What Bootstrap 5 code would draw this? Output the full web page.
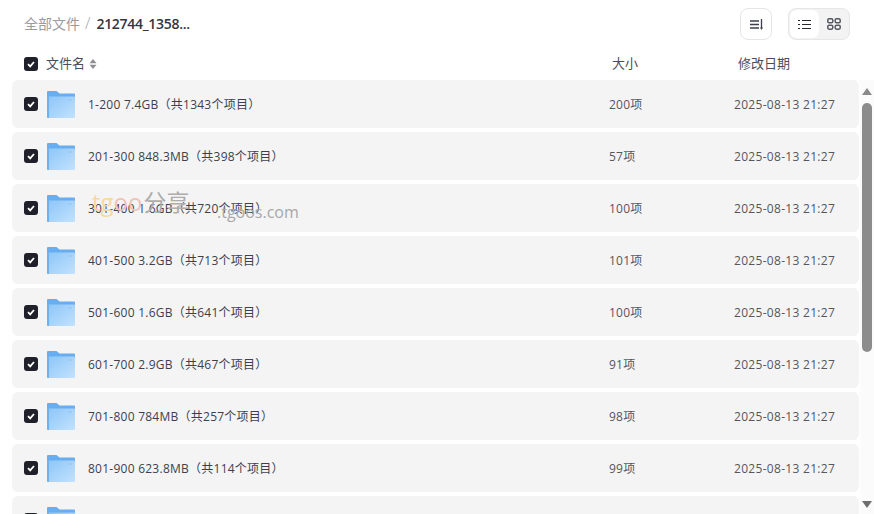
<!DOCTYPE html>
<html lang="zh-CN">
<head>
  <meta charset="UTF-8" />
  <title>全部文件</title>
  <meta name="viewport" content="width=device-width, initial-scale=1" />
  <link href="https://cdn.jsdelivr.net/npm/bootstrap@5.3.0/dist/css/bootstrap.min.css" rel="stylesheet" />
  <style>
    html, body { height: 100%; overflow: hidden; }
    body {
      background: #fff;
      color: #3d3f4e;
      font-family: "Open Sans", "Noto Sans CJK SC", sans-serif;
      font-size: 13px;
    }
    .page-wrap { height: 514px; width: 874px; overflow: hidden; position: relative; }
    .top-bar { height: 48px; padding: 0 24px; }
    .crumb-box { margin-top: -2px; }
    .crumb-root { color: #9a9a9f; font-size: 14px; }
    .crumb-sep { color: #a5a5aa; margin: 0 6px 0 5px; font-size: 16px; line-height: 1; font-weight: 300; }
    .crumb-cur { color: #33353f; font-weight: 600; font-size: 14px; letter-spacing: -.3px; }
    .sort-btn {
      width: 32px; height: 32px; border: 1px solid #e6e6e8; border-radius: 8px;
      background: #fff; padding: 0;
    }
    .view-switch {
      height: 32px; width: 62px; margin-left: 16px; padding: 1px;
      background: #f3f3f4; border: 1px solid #e6e6e8; border-radius: 8px;
    }
    .view-on { width: 30px; background: #fff; border-radius: 7px; }
    .view-off { width: 30px; }
    .head-row { height: 32px; padding: 0 24px; color: #4b4d5a; }
    .tick {
      width: 14px; height: 14px; flex: none; background: #1f2029; border-radius: 3px;
    }
    .head-size { width: 126px; flex: none; }
    .head-date { width: 125px; flex: none; }
    .head-name { margin-left: 8px; width: 566px; flex: none; }
    .list-wrap { height: 434px; overflow: hidden; padding: 0 15px 0 12px; }
    .file-row {
      height: 48px; background: #f4f4f5; border-radius: 6px; margin-bottom: 4px;
      padding-left: 12px; white-space: nowrap; font-size: 12px; letter-spacing: .25px;
    }
    .folder { width: 30px; height: 30px; flex: none; margin-left: 8px; }
    .file-name { width: 521px; flex: none; margin-left: 12px; padding-top: 2px; color: #3d3f4e; }
    .file-size { width: 125px; flex: none; padding-top: 2px; color: #55565f; }
    .file-date { width: 125px; flex: none; padding-top: 2px; color: #55565f; letter-spacing: .3px; }
    .bar-track {
      position: absolute; right: 0; top: 80px; bottom: 0; width: 14px; background: #fbfbfb;
    }
    .bar-up, .bar-down {
      position: absolute; left: 2px; width: 0; height: 0;
      border-left: 5px solid transparent; border-right: 5px solid transparent;
    }
    .bar-up { top: 8px; border-bottom: 7px solid #8a8a8a; }
    .bar-down { bottom: 6px; border-top: 7px solid #6e6e6e; }
    .bar-thumb {
      position: absolute; left: 2px; top: 23px; width: 10px; height: 249px;
      background: #8c8c8c; border-radius: 5px;
    }
    .mark-wrap {
      position: absolute; left: 92px; top: 184px; white-space: nowrap;
      pointer-events: none; font-size: 24px;
    }
    .mark-a { color: #f7d9a0; }
    .mark-b { color: #f5c0b8; }
    .mark-c { color: #adadad; font-size: 23px; margin-left: 1px; }
    .mark-d { font-size: 16px; color: #a8a8a8; position: absolute; left: 125px; top: 16px; }
  </style>
</head>
<body>
  <div class="page-wrap">
    <div class="top-bar d-flex align-items-center justify-content-between">
      <div class="crumb-box d-flex align-items-center">
        <span class="crumb-root">全部文件</span>
        <span class="crumb-sep">/</span>
        <span class="crumb-cur">212744_1358...</span>
      </div>
      <div class="d-flex align-items-center">
        <button class="sort-btn d-flex align-items-center justify-content-center" type="button">
          <svg width="15" height="13" viewBox="0 0 15 13" fill="none" stroke="#3d3f4e" stroke-width="1.3">
            <path d="M1 3h9M1 6.500h9M1 10h9"/>
            <path d="M12.500 1v9"/>
            <path d="M11 9.500h3l-1.500 2.500z" fill="#3d3f4e" stroke="none"/>
          </svg>
        </button>
        <div class="view-switch d-flex">
          <div class="view-on d-flex align-items-center justify-content-center">
            <svg width="13" height="11" viewBox="0 0 13 11" fill="none" stroke="#26272f" stroke-width="1.2">
              <path d="M0 1.500h2M4 1.500h9M0 5.500h2M4 5.500h9M0 9.500h2M4 9.500h9"/>
            </svg>
          </div>
          <div class="view-off d-flex align-items-center justify-content-center">
            <svg width="14" height="12" viewBox="0 0 14 12" fill="none" stroke="#55565f" stroke-width="1.5">
              <rect x=".8" y=".8" width="5" height="4" rx="1.4"/>
              <rect x="8.200" y=".8" width="5" height="4" rx="1.4"/>
              <rect x=".8" y="7.200" width="5" height="4" rx="1.4"/>
              <rect x="8.200" y="7.200" width="5" height="4" rx="1.4"/>
            </svg>
          </div>
        </div>
      </div>
    </div>

    <div class="head-row d-flex align-items-center">
      <span class="tick d-flex align-items-center justify-content-center">
        <svg width="10" height="10" viewBox="0 0 10 10" fill="none" stroke="#fff" stroke-width="1.8"><path d="M2 5.200l2.200 2.200L8 3"/></svg>
      </span>
      <div class="head-name d-flex align-items-center gap-1">
        <span>文件名</span>
        <svg width="8" height="12" viewBox="0 0 8 12" fill="#8f8f93"><path d="M4 1l3.500 4.200H.5zM4 11L.5 6.800h7z"/></svg>
      </div>
      <div class="head-size">大小</div>
      <div class="head-date">修改日期</div>
    </div>

    <div class="list-wrap" id="fileList"></div>

    <div class="bar-track">
      <div class="bar-up"></div>
      <div class="bar-thumb"></div>
      <div class="bar-down"></div>
    </div>

    <div class="mark-wrap"><span class="mark-a">tg</span><span class="mark-b">oo</span><span class="mark-c">分享</span><span class="mark-d">.tgoos.com</span></div>
  </div>

  <script>
    const files = [
      ["1-200 7.4GB（共1343个项目）", "200项"],
      ["201-300 848.3MB（共398个项目）", "57项"],
      ["301-400 1.6GB（共720个项目）", "100项"],
      ["401-500 3.2GB（共713个项目）", "101项"],
      ["501-600 1.6GB（共641个项目）", "100项"],
      ["601-700 2.9GB（共467个项目）", "91项"],
      ["701-800 784MB（共257个项目）", "98项"],
      ["801-900 623.8MB（共114个项目）", "99项"],
      null
    ];
    const list = document.getElementById("fileList");
    files.forEach((f, i) => {
      const row = document.createElement("div");
      row.className = "file-row d-flex align-items-center";
      const cells = f ? `
        <div class="file-name">${f[0]}</div>
        <div class="file-size">${f[1]}</div>
        <div class="file-date">2025-08-13 21:27</div>` : "";
      row.innerHTML = `
        <span class="tick d-flex align-items-center justify-content-center">
          <svg width="10" height="10" viewBox="0 0 10 10" fill="none" stroke="#fff" stroke-width="1.8"><path d="M2 5.200l2.200 2.200L8 3"/></svg>
        </span>
        <svg class="folder" viewBox="0 0 30 30">
          <defs><linearGradient id="fg${i}" x1="0" y1="0" x2="1" y2="1"><stop offset="0" stop-color="#8cc5f8"/><stop offset="1" stop-color="#c2e2fd"/></linearGradient></defs>
          <path d="M1 3a1 1 0 0 1 1-1h8.500l3 2.500H28a1 1 0 0 1 1 1V9H1z" fill="#66aeef"/>
          <path d="M1 7.500h27a1 1 0 0 1 1 1V28a1 1 0 0 1-1 1H2a1 1 0 0 1-1-1z" fill="url(#fg${i})"/>
          <path d="M1 7.500V28a1 1 0 0 0 1 1h1V7.500z" fill="#6db2f0"/>
          <rect x="22" y="10" width="4" height="2" fill="#9ccbf6"/>
        </svg>${cells}`;
      list.appendChild(row);
    });
  </script>
  <script src="https://cdn.jsdelivr.net/npm/bootstrap@5.3.0/dist/js/bootstrap.bundle.min.js"></script>
</body>
</html>
